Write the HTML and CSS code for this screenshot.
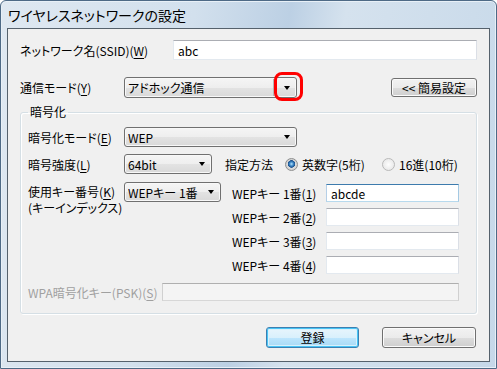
FILE: index.html
```html
<!DOCTYPE html>
<html lang="ja">
<head>
    <meta charset="UTF-8">
    <title>ワイヤレスネットワークの設定</title>
    <link rel="stylesheet" href="styles.css">
</head>
<body>
    <div class="window">
        <div class="titlebar">ワイヤレスネットワークの設定</div>

        <div class="client">
            <!-- SSID -->
            <div class="row row-ssid">
                <label class="lbl lbl-ssid">ネットワーク名(SSID)(<u>W</u>)</label>
                <input class="text text-ssid" type="text" value="abc">
            </div>

            <!-- 通信モード -->
            <div class="row row-mode">
                <label class="lbl lbl-mode">通信モード(<u>Y</u>)</label>
                <span class="combo combo-mode hot">
                    <select>
                        <option>アドホック通信</option>
                        <option>インフラストラクチャ通信</option>
                    </select>
                    <span class="mark"></span>
                </span>
                <button class="btn btn-simple" type="button">&lt;&lt; 簡易設定</button>
            </div>

            <!-- 暗号化 -->
            <fieldset class="group">
                <legend>暗号化</legend>

                <div class="row row-enc">
                    <label class="lbl lbl-g">暗号化モード(<u>E</u>)</label>
                    <span class="combo combo-enc">
                        <select><option>WEP</option><option>WPA-PSK</option></select>
                    </span>
                </div>

                <div class="row row-str">
                    <label class="lbl lbl-g">暗号強度(<u>L</u>)</label>
                    <span class="combo combo-str">
                        <select><option>64bit</option><option>128bit</option></select>
                    </span>
                    <span class="method">指定方法</span>
                    <label class="opt opt-a"><input type="radio" name="fmt" checked>英数字(5桁)</label>
                    <label class="opt"><input type="radio" name="fmt">16進(10桁)</label>
                </div>

                <div class="row-key">
                    <label class="lbl lbl-key">使用キー番号(<u>K</u>)<br>(キーインデックス)</label>
                    <span class="combo combo-key">
                        <select><option>WEPキー 1番</option><option>WEPキー 2番</option></select>
                    </span>
                    <div class="key-list">
                        <div class="key-row">
                            <label class="lbl lbl-wep">WEPキー 1番(<u>1</u>)</label>
                            <input class="text text-key focus" type="text" value="abcde">
                        </div>
                        <div class="key-row">
                            <label class="lbl lbl-wep">WEPキー 2番(<u>2</u>)</label>
                            <input class="text text-key" type="text">
                        </div>
                        <div class="key-row">
                            <label class="lbl lbl-wep">WEPキー 3番(<u>3</u>)</label>
                            <input class="text text-key" type="text">
                        </div>
                        <div class="key-row">
                            <label class="lbl lbl-wep">WEPキー 4番(<u>4</u>)</label>
                            <input class="text text-key" type="text">
                        </div>
                    </div>
                </div>

                <div class="row row-wpa">
                    <label class="lbl lbl-wpa">WPA暗号化キー(PSK)(<u>S</u>)</label>
                    <input class="text text-wpa" type="text" disabled>
                </div>
            </fieldset>

            <div class="actions">
                <button class="btn btn-default" type="button">登録</button>
                <button class="btn btn-cancel" type="button">キャンセル</button>
            </div>
        </div>
    </div>
</body>
</html>
```

FILE: styles.css
```css
body {
    margin: 0;
    font-family: "Noto Sans CJK JP", "Noto Sans", sans-serif;
    font-size: 12px;
    font-feature-settings: "palt";
    color: #000;
}

/* ウィンドウ枠 */
.window {
    width: 497px;
    height: 369px;
    box-sizing: border-box;
    border: 1px solid #4e6a86;
    border-radius: 6px 6px 0 0;
    padding: 0 6px 6px;
    display: flex;
    flex-direction: column;
    background: linear-gradient(100deg, #dfe8f1 0%, #d2e0ed 35%, #bcd0e4 52%, #d5e2ee 62%, #c6d8e9 100%);
    box-shadow: inset 0 0 0 1px #e8f0f7;
}

.titlebar {
    height: 27px;
    line-height: 28px;
    padding-left: 1px;
    font-size: 14px;
}

.client {
    flex: 1;
    background: #f0f0f0;
    border: 1px solid #55616c;
    padding: 0 12px;
}

.row {
    display: flex;
    align-items: center;
}

.lbl {
    white-space: nowrap;
}

u {
    text-decoration-thickness: 1px;
    text-underline-offset: 2px;
}

/* テキストボックス */
.text {
    box-sizing: border-box;
    height: 20px;
    margin: 0;
    padding: 0 4px;
    border: 1px solid;
    border-color: #abadb3 #dbdfe6 #e3e9ef #e3e9ef;
    background: #fff;
    font: inherit;
    outline: none;
}

.text.focus {
    border-color: #3d7bad #a4c9e3 #b7d9ed #b5cfe7;
}

.text:disabled {
    background: #f4f4f4;
    border-color: #afafaf #d0d0d0 #d7d7d7 #d0d0d0;
}

.row-ssid {
    margin-top: 11px;
    height: 20px;
}

.lbl-ssid {
    width: 153px;
}

.text-ssid {
    width: 304px;
}

.row-mode {
    margin-top: 17px;
    height: 21px;
}

.lbl-mode {
    width: 104px;
}

/* コンボボックス */
.combo {
    position: relative;
    display: inline-block;
    box-sizing: border-box;
    height: 20px;
    border: 1px solid #707070;
    border-radius: 3px;
    background: linear-gradient(#f5f5f5, #eeeeee 50%, #e3e3e3 50%, #d9d9d9);
    box-shadow: inset 0 0 0 1px #f8f8f8;
}

.combo select {
    appearance: none;
    width: 100%;
    height: 100%;
    margin: 0;
    padding: 0 0 0 3px;
    border: 0;
    background: transparent;
    font: inherit;
    color: #000;
    outline: none;
}

.combo::after {
    content: "";
    position: absolute;
    right: 6px;
    top: 50%;
    margin-top: -2px;
    border-top: 4px solid #000;
    border-left: 3.5px solid transparent;
    border-right: 3.5px solid transparent;
    pointer-events: none;
}

.combo.hot::before {
    content: "";
    position: absolute;
    right: 22px;
    top: 1px;
    bottom: 1px;
    width: 1px;
    background: #b5b5b5;
}

/* 赤い囲み */
.combo .mark {
    position: absolute;
    left: 149px;
    top: -6px;
    width: 29px;
    height: 29px;
    box-sizing: border-box;
    border: 3px solid #f00;
    border-radius: 8px;
    pointer-events: none;
}

.combo-mode {
    width: 173px;
    height: 21px;
}

.combo-enc {
    width: 173px;
}

.combo-str {
    width: 88px;
}

.combo-key {
    width: 97px;
}

/* ボタン */
.btn {
    box-sizing: border-box;
    margin: 0;
    padding: 0;
    border: 1px solid #707070;
    border-radius: 3px;
    background: linear-gradient(#f2f2f2, #ebebeb 50%, #dddddd 50%, #cfcfcf);
    box-shadow: inset 0 0 0 1px #fbfbfb;
    font: inherit;
    color: #000;
}

.btn-simple {
    margin-left: auto;
    width: 86px;
    height: 19px;
}

.btn-default {
    border-color: #3c7fb1;
    background: linear-gradient(#e8f5fc, #d9f0fc 50%, #bee6fd 50%, #a7d9f5);
    box-shadow: inset 0 0 0 1px #48c4f5, inset 0 0 0 2px #d8f1fc;
}

/* グループ */
.group {
    margin: 7px 0 0;
    padding: 8px 0 12px 7px;
    border: 1px solid #d5dfe5;
    border-radius: 3px;
    box-shadow: inset 1px 1px 0 #fff, 1px 1px 0 #fff;
    min-width: 0;
}

.group legend {
    padding: 0 2px;
    line-height: 14px;
}

.row-enc {
    height: 20px;
}

.lbl-g {
    width: 96px;
}

.row-str {
    margin-top: 7px;
    height: 20px;
}

.method {
    margin-left: 13px;
    width: 60px;
}

.opt {
    display: flex;
    align-items: center;
    gap: 4px;
}

.opt-a {
    width: 97px;
}

.opt input {
    appearance: none;
    margin: 0;
    width: 13px;
    height: 13px;
    border-radius: 50%;
    border: 1px solid #b9b9b9;
    background: radial-gradient(circle, #fdfdfd 0, #ececec 5px);
}

.opt input:checked {
    border-color: #8e8f8f;
    background:
        radial-gradient(circle at 50% 45%, #b6e3fb 0, #3b86c6 2px, #1b4f8a 3.5px, transparent 4px),
        radial-gradient(circle, #f6f6f6 0, #d4d4d4 5px);
}

.row-key {
    margin-top: 8px;
    display: flex;
    align-items: flex-start;
}

.lbl-key {
    width: 96px;
    padding-top: 2px;
    line-height: 16px;
}

.key-list {
    margin-left: 11px;
    margin-top: 2px;
}

.key-row {
    display: flex;
    align-items: center;
    height: 18px;
}

.key-row + .key-row {
    margin-top: 6px;
}

.lbl-wep {
    width: 94px;
}

.text-key {
    width: 133px;
    height: 18px;
}

.row-wpa {
    margin-top: 9px;
    height: 18px;
}

.lbl-wpa {
    width: 134px;
    color: #a0a0a0;
}

.text-wpa {
    width: 297px;
    height: 18px;
}

.actions {
    display: flex;
    justify-content: flex-end;
    gap: 23px;
    margin-top: 13px;
    padding-right: 1px;
}

.actions .btn {
    width: 93px;
    height: 21px;
}

.actions .btn-cancel {
    width: 94px;
}
```
